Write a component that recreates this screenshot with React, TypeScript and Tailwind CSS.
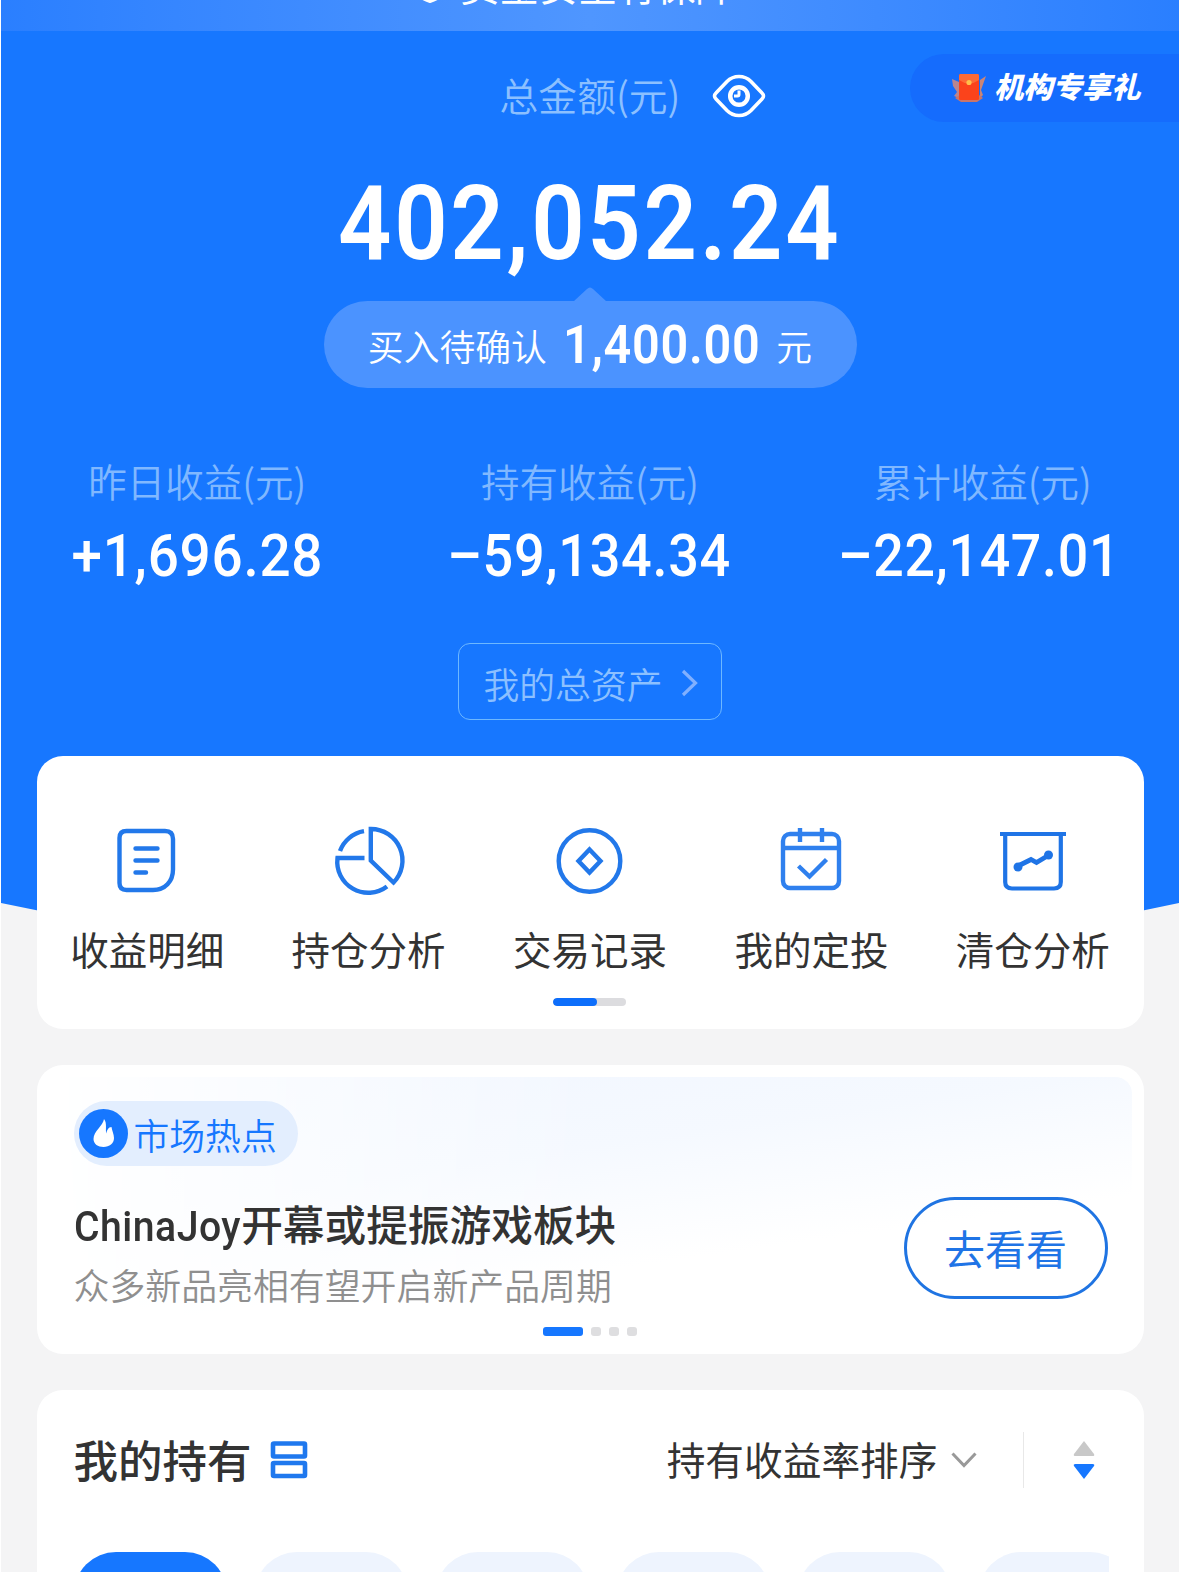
import clsx from "clsx";

const stats = [
  { label: "昨日收益(元)", value: "+1,696.28", width: "scale-x-[0.93]" },
  { label: "持有收益(元)", value: "–59,134.34", width: "scale-x-[0.915] -ml-[2px]" },
  { label: "累计收益(元)", value: "–22,147.01", width: "scale-x-[0.91] -ml-[7px]" },
];

const DetailIcon = () => (
  <svg className="h-[68px] w-[68px]" viewBox="0 0 68 68" fill="none" stroke="#2278ea" strokeWidth="4.4">
    <path d="M13.500 4H52Q60 4 60 12V42.500C60 54.500 52 63 40 63H13.500Q6.500 63 6.500 56V11Q6.500 4 13.500 4Z" />
    <path d="M22.500 21.500H44.500M22.500 33.500H44.500M22.500 45.500H33" strokeLinecap="round" />
  </svg>
);

const PieIcon = () => (
  <svg className="h-[68px] w-[68px] overflow-visible" viewBox="0 0 68 68" fill="none" stroke="#2278ea" strokeWidth="4.400">
    <path d="M35.800 2V33.500L58.500 55.500A31.500 31.500 0 0 0 35.800 2Z" />
    <path d="M29.500 31H2.500A31 31 0 0 0 52 59.500" />
    <path d="M5 24A31 31 0 0 1 29 4.200" />
  </svg>
);

const RecordIcon = () => (
  <svg className="h-[68px] w-[68px]" viewBox="0 0 68 68" fill="none" stroke="#2278ea" strokeWidth="4.400">
    <circle cx="33.500" cy="34" r="30.800" />
    <path d="M33.500 22.500L44.500 34L33.500 45.500L22.500 34Z" />
  </svg>
);

const PlanIcon = () => (
  <svg className="h-[68px] w-[68px]" viewBox="0 0 68 68" fill="none" stroke="#2f80ee" strokeWidth="4.400">
    <rect x="6" y="7" width="56" height="54" rx="7" />
    <path d="M6 21H62M23 1V15M45 1V15" />
    <path d="M21.500 39L32.500 49.500L49.500 32.500" />
  </svg>
);

const ClearIcon = () => (
  <svg className="h-[68px] w-[68px]" viewBox="0 0 68 68" fill="none" stroke="#1f74e6" strokeWidth="4.200">
    <path d="M1 7H67" />
    <path d="M6.200 7V55Q6.200 61.500 13 61.500H55Q61.800 61.500 61.800 55V7" />
    <path d="M19 39L32 32.500L37.500 35.500L50 28" strokeWidth="4.800" />
    <circle cx="19" cy="40" r="4.500" fill="#1f74e6" stroke="none" />
    <circle cx="49.500" cy="28" r="4.500" fill="#1f74e6" stroke="none" />
  </svg>
);

const menus = [
  { name: "收益明细", icon: <DetailIcon /> },
  { name: "持仓分析", icon: <PieIcon /> },
  { name: "交易记录", icon: <RecordIcon /> },
  { name: "我的定投", icon: <PlanIcon /> },
  { name: "清仓分析", icon: <ClearIcon /> },
];

function Hero() {
  return (
    <header className="relative flex h-[756px] flex-col">
      <div className="flex h-[31px] shrink-0 items-end justify-center overflow-hidden bg-linear-to-r from-[#2a7fff] via-[#4f96ff] to-[#2a7fff] pb-[25px]">
        <div className="flex items-end gap-[15px] pr-[30px] text-[39.200px] leading-[44px] text-white">
          <svg className="mb-[3px] h-[30px] w-[30px]" viewBox="0 0 30 30" fill="none" stroke="white" strokeWidth="3.500">
            <path d="M15 2L27 6V16Q27 25 15 28.200Q3 25 3 16V6Z" />
          </svg>
          <span>资金安全有保障</span>
        </div>
      </div>

      <div className="flex h-[130px] items-center justify-center gap-[32px] pl-[86px]">
        <span className="-mt-[4px] text-[38.800px] font-[350] text-[#8cc0ff]">总金额(元)</span>
        <svg className="h-[44px] w-[54px]" viewBox="0 0 54 44" fill="none" stroke="white">
          <path d="M2.500 22Q2.500 20.500 4 19L15 7.500Q20 2.500 27 2.500T39 7.500L50 19Q51.500 20.500 51.500 22T50 25L39 36.500Q34 41.500 27 41.500T15 36.500L4 25Q2.500 23.500 2.500 22Z" strokeWidth="3.600" />
          <circle cx="27" cy="22" r="8.800" strokeWidth="4.500" />
          <path d="M27 16.500V20.500Q27 22 25.500 22H22" strokeWidth="3" />
        </svg>
      </div>

      <div className="absolute top-[54px] right-0 flex h-[68px] w-[269px] items-center gap-[8px] rounded-l-full bg-[#156cfd] pl-[41px]">
        <svg className="h-[32px] w-[35px]" viewBox="0 0 35 32">
          <path d="M1 7L8 10V26L3 24L6 20L2 14Z" fill="#b98590" />
          <path d="M35 4L29 8V26L32 23L30 18Z" fill="#c98578" />
          <path d="M4 26L9 23H28L32 26L26 30H10Z" fill="#c9756a" />
          <rect x="8" y="2" width="20" height="26" rx="1.500" fill="#fb431b" />
          <path d="M8 3.500Q8 2 9.500 2H26.500Q28 2 28 3.500V8Q18 15 8 8Z" fill="#fd6a35" />
          <circle cx="18" cy="10.500" r="2.600" fill="#ffc04a" />
        </svg>
        <span className="-mt-[4px] text-[29.300px] font-black whitespace-nowrap text-white italic">机构专享礼</span>
      </div>

      <div className="flex h-[126px] items-center justify-center">
        <span className="scale-x-[0.9] font-[Roboto] text-[104px] leading-none font-semibold tracking-[3px] text-white">402,052.24</span>
      </div>

      <div className="flex h-[101px] flex-col items-center">
        <svg className="h-[14px] w-[32px]" viewBox="0 0 32 14">
          <path d="M0 14L13 2Q16 -1 19 2L32 14Z" fill="#4b93ff" />
        </svg>
        <div className="flex h-[87px] w-[533px] items-center justify-center rounded-full bg-[#4b93ff] text-white">
          <span className="pt-[2px] text-[35.800px] font-[350]">买入待确认</span>
          <span className="mx-[5px] scale-x-[0.9] font-[Roboto] text-[54px] leading-none font-semibold tracking-[0.800px]">1,400.00</span>
          <span className="pt-[2px] text-[35.800px] font-[350]">元</span>
        </div>
      </div>

      <div className="mt-[63px] grid grid-cols-3">
        {stats.map((item) => (
          <div key={item.label} className="flex flex-col items-center">
            <span className="text-[38.500px] leading-[58px] font-[350] text-[#80b8ff]">{item.label}</span>
            <span className={clsx("mt-[17px] font-[Roboto] text-[59px] leading-[60px] font-medium tracking-[0.800px] whitespace-nowrap text-white", item.width)}>
              {item.value}
            </span>
          </div>
        ))}
      </div>

      <button className="mx-auto mt-[57px] flex h-[77px] w-[264px] items-center justify-center gap-[19px] rounded-[12px] border border-[#6eb8ff] text-[35.800px] font-[350] text-[#8cc0ff]">
        <span className="pt-[4px] pl-[2px]">我的总资产</span>
        <svg className="mt-[2px] h-[28px] w-[17px]" viewBox="0 0 17 28" fill="none" stroke="#80b0ff" strokeWidth="3.200">
          <path d="M2 2L14.500 14L2 26" />
        </svg>
      </button>
    </header>
  );
}

function MenuCard() {
  return (
    <section className="relative mx-[35.500px] flex h-[273px] flex-col rounded-[26px] bg-white pt-[71px]">
      <div className="grid grid-cols-5">
        {menus.map((item) => (
          <div key={item.name} className="flex flex-col items-center">
            {item.icon}
            <span className="mt-[24px] text-[38.500px] leading-[58px] text-[#333]">{item.name}</span>
          </div>
        ))}
      </div>
      <div className="mx-auto mt-[21px] h-[8px] w-[73px] -translate-x-px overflow-hidden rounded-full bg-[#dcdcdf]">
        <div className="h-full w-[44px] rounded-full bg-[#0d6efb]" />
      </div>
    </section>
  );
}

function HotCard() {
  return (
    <section className="relative mx-[35.500px] mt-[36px] h-[289px] rounded-[26px] bg-white p-[12px]">
      <div className="h-full rounded-[16px] bg-[linear-gradient(172deg,#f1f6ff_0%,#f5f9ff_35%,#ffffff_65%)] mask-[linear-gradient(to_right,transparent,black_50%)]" />
      <div className="absolute inset-0 flex flex-col px-[37px] pt-[36px]">
        <div className="flex h-[65px] w-[224px] items-center gap-[6px] rounded-full bg-[#e3eefe] pl-[5px]">
          <svg className="h-[49px] w-[49px]" viewBox="0 0 49 49">
            <circle cx="24.500" cy="24.500" r="24.500" fill="#1677ff" />
            <path d="M25 10C24 17 14.500 22 14.500 30C14.500 35 19 38 24.500 38C30.500 38 35 34.500 35 29C35 25 33 22 32.500 18C29.500 18 27.500 21.500 27.500 24.500C26 22 28.500 14 25 10Z" fill="white" />
          </svg>
          <span className="pt-[3px] text-[35.800px] font-[350] text-[#1677ff]">市场热点</span>
        </div>
        <div className="mt-[25px] flex items-center justify-between">
          <div>
            <h2 className="-mt-[1px] text-[41.700px] leading-[66px] font-medium text-[#333]">
              <span className="-mr-[10px] inline-block origin-left scale-x-[0.94] font-[Roboto] tracking-[0.500px]">ChinaJoy</span>开幕或提振游戏板块
            </h2>
            <p className="text-[35.900px] leading-[48px] font-[350] text-[#8f8f8f]">众多新品亮相有望开启新产品周期</p>
          </div>
          <button className="mt-[-3px] -mr-px flex h-[102px] w-[204px] items-center justify-center rounded-full border-3 border-[#1f74e2] text-[41px] text-[#1f74e6]">去看看</button>
        </div>
        <div className="mt-[19px] flex justify-center gap-[8px]">
          <div className="h-[9px] w-[40px] rounded-[3px] bg-[#1677ff]" />
          <div className="h-[9px] w-[10px] rounded-[3px] bg-[#dedee0]" />
          <div className="h-[9px] w-[10px] rounded-[3px] bg-[#dedee0]" />
          <div className="h-[9px] w-[10px] rounded-[3px] bg-[#dedee0]" />
        </div>
      </div>
    </section>
  );
}

function Holdings() {
  return (
    <section className="relative mx-[35.500px] mt-[36px] h-[300px] rounded-[26px] bg-white pr-[35px] pl-[37px] pt-[40px]">
      <div className="flex h-[60px] items-center">
        <h2 className="-mt-[2px] text-[44.500px] leading-[60px] font-medium text-[#333]">我的持有</h2>
        <svg className="ml-[18px] h-[38px] w-[38px]" viewBox="0 0 38 38" fill="none" stroke="#1f78ee" strokeWidth="4.600">
          <rect x="3" y="2.500" width="32" height="13" rx="1" />
          <rect x="3" y="22" width="32" height="13" rx="1" />
        </svg>
        <span className="-mt-[3px] ml-auto text-[38.700px] text-[#333]">持有收益率排序</span>
        <svg className="ml-[13px] h-[18px] w-[26px]" viewBox="0 0 26 18" fill="none" stroke="#999" strokeWidth="3">
          <path d="M1.500 2.500L13 14.500L24.500 2.500" />
        </svg>
        <div className="ml-[46px] h-[56px] w-px bg-[#e8e8e8]" />
        <svg className="mr-[14px] ml-[49px] h-[40px] w-[22px]" viewBox="0 0 22 40">
          <path d="M11 1L21 14Q22 16 19.500 16H2.500Q0 16 1 14Z" fill="#c8c8c8" />
          <path d="M11 39L21 26Q22 24 19.500 24H2.500Q0 24 1 26Z" fill="#1677ff" />
        </svg>
      </div>
      <div className="mt-[62px] flex gap-[28px] overflow-hidden">
        <div className="h-[84px] w-[153px] shrink-0 rounded-full bg-[#1677ff]" />
        {[1, 2, 3, 4, 5].map((n) => (
          <div key={n} className="h-[84px] w-[153px] shrink-0 rounded-full bg-[#eef4fe]" />
        ))}
      </div>
    </section>
  );
}

export default function App() {
  return (
    <div className="h-[1572px] w-[1179px] overflow-hidden border-l border-white bg-[#f4f4f5] font-['Noto_Sans_CJK_SC',sans-serif]">
      <div className="relative">
        {/* blue backdrop with the curved bottom edge */}
        <svg className="absolute top-0 left-0 h-[960px] w-full" viewBox="0 0 1178 960" preserveAspectRatio="none">
          <path d="M0 0H1178V903Q590 1030 0 903Z" fill="#1777ff" />
        </svg>
        <Hero />
        <MenuCard />
      </div>
      <HotCard />
      <Holdings />
    </div>
  );
}
